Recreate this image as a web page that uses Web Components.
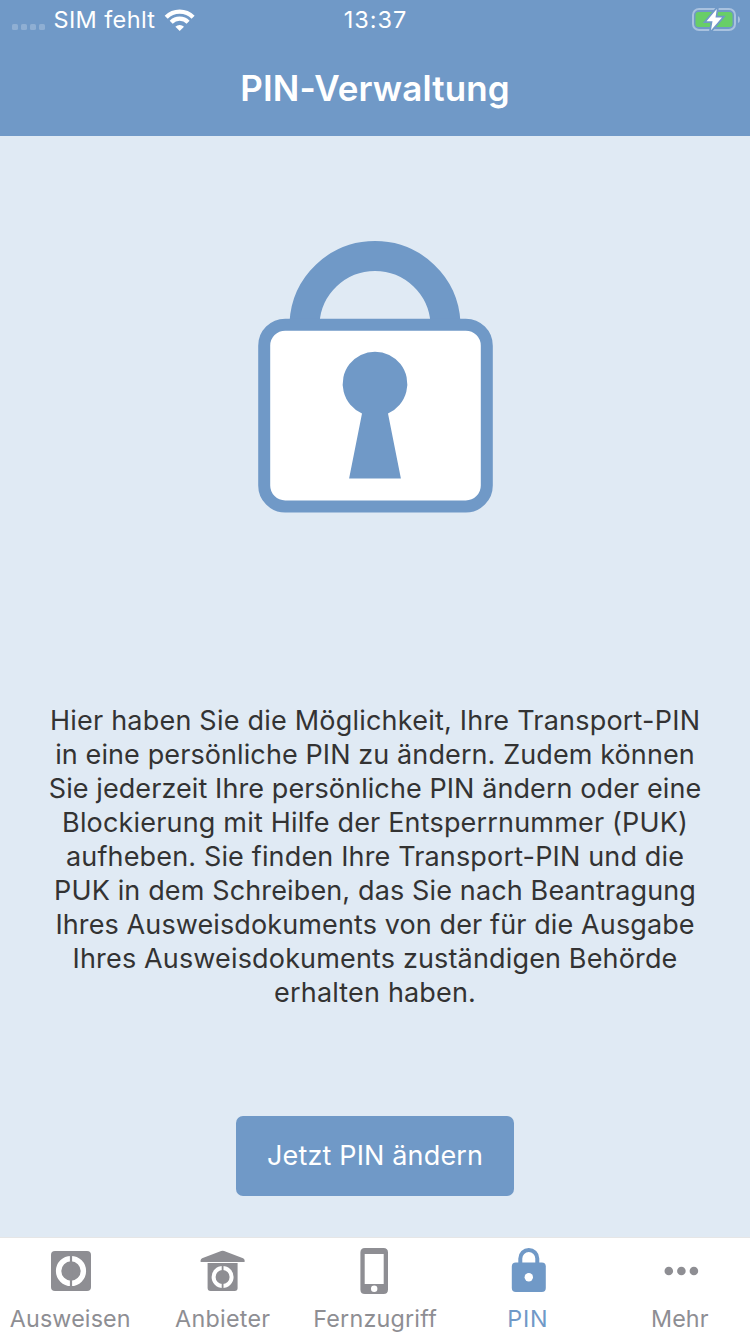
<!DOCTYPE html>
<html lang="de">
<head>
<meta charset="utf-8">
<title>PIN-Verwaltung</title>
<style>
html,body{margin:0;padding:0;height:100%}
body{font-family:Inter,"Noto Sans",sans-serif;overflow:hidden;background:#e0eaf4}
</style>
</head>
<body>
<pin-app></pin-app>
<script>
const define = (name, html, setup) => customElements.define(name, class extends HTMLElement {
  connectedCallback() {
    if (this.shadowRoot) return;
    const t = document.createElement('template');
    t.innerHTML = html;
    this.attachShadow({mode: 'open'}).append(t.content.cloneNode(true));
    if (setup) setup(this, this.shadowRoot);
  }
});

/* A single line of text tracked out to a given ink width. */
define('fit-text', `<style>:host{display:block;white-space:pre;width:max-content}</style><slot></slot>`, el => {
  const text = el.textContent, cs = getComputedStyle(el);
  const ctx = document.createElement('canvas').getContext('2d');
  ctx.font = `${cs.fontWeight} ${cs.fontSize} ${cs.fontFamily}`;
  const m = ctx.measureText(text);
  const ink = m.actualBoundingBoxRight + m.actualBoundingBoxLeft;
  const ls = (parseFloat(el.getAttribute('ink')) - ink) / (text.length - 1);
  el.style.letterSpacing = ls.toFixed(3) + 'px';
  el.style.marginRight = (-ls).toFixed(3) + 'px';
});

define('status-bar', `<style>
:host{display:grid;grid-template-columns:1fr auto 1fr;height:40px;color:#fff;font-size:23.5px;line-height:40px}
.left{display:flex;padding-left:12px}
.left svg:first-child{margin-right:7.500px}
.left svg:last-child{margin-left:.400px}
.right{display:flex;justify-content:flex-end}
fit-text{font-weight:430}
</style>
<div class="left">
<svg width="34" height="40" viewBox="12 0 34 40" fill="#8fafd3"><rect x="12" y="24" width="6" height="6" rx="1.6"/><rect x="21" y="24" width="6" height="6" rx="1.6"/><rect x="30" y="24" width="6" height="6" rx="1.6"/><rect x="39" y="24" width="6" height="6" rx="1.6"/></svg>
<fit-text ink="100.8">SIM fehlt</fit-text>
<svg width="42" height="40" viewBox="156 0 42 40"><g fill="none" stroke="#fff" stroke-width="4.300"><path d="M167.2 17.2a19 19 0 0 1 26.9 0"/><path d="M172.2 22.2a12 12 0 0 1 16.9 0"/></g><path d="M180.7 31l-4.3-4.3a6.2 6.2 0 0 1 8.6 0z" fill="#fff"/></svg>
</div>
<fit-text ink="61.3">13:37</fit-text>
<div class="right"><svg width="60" height="40" viewBox="690 0 60 40">
<rect x="693" y="9" width="42" height="21" rx="6" fill="none" stroke="#a9c2df" stroke-width="2"/>
<path d="M738 16q2 1 2 3.5t-2 3.5z" fill="#a9c2df"/>
<rect x="695.5" y="12" width="37" height="15" rx="3" fill="#68ce67"/>
<path d="M716.800 9L706.500 21.300h6l-1.500 9L722 17.500h-6.500z" fill="#fff" stroke="#7099c7" stroke-width="3.500" paint-order="stroke"/></svg></div>`);

define('title-bar', `<style>
:host{display:flex;justify-content:center;height:96px;color:#fff;font-size:35px;font-weight:580;line-height:96px}
</style>`, (el, root) => {
  const f = document.createElement('fit-text');
  f.setAttribute('ink', '265.5');
  f.textContent = el.getAttribute('label');
  root.append(f);
});

define('lock-picture', `<style>:host{display:block;height:276px}svg{display:block;margin:auto}</style>
<svg width="240" height="276" viewBox="255 238 240 276">
<path fill="none" stroke="#7099c7" stroke-width="30" d="M304.500 322A70.600 70.600 0 0 1 445.500 322" transform="translate(0 .8)"/>
<rect x="264.200" y="324.700" width="222.600" height="181.800" rx="21" fill="#fff" stroke="#7099c7" stroke-width="12"/>
<path fill="#7099c7" d="M362 413.500A32.300 32.300 0 1 1 388 413.500L400.900 478.500H349.100z"/></svg>`);

define('info-text', `<style>
:host{display:flex;flex-direction:column;align-items:center;font-size:27px;line-height:34px;color:#333}
</style>
<fit-text ink="645.7">Hier haben Sie die Möglichkeit, Ihre Transport-PIN</fit-text>
<fit-text ink="636.6">in eine persönliche PIN zu ändern. Zudem können</fit-text>
<fit-text ink="650.7">Sie jederzeit Ihre persönliche PIN ändern oder eine</fit-text>
<fit-text ink="621">Blockierung mit Hilfe der Entsperrnummer (PUK)</fit-text>
<fit-text ink="616.3">aufheben. Sie finden Ihre Transport-PIN und die</fit-text>
<fit-text ink="638.3">PUK in dem Schreiben, das Sie nach Beantragung</fit-text>
<fit-text ink="636.5">Ihres Ausweisdokuments von der für die Ausgabe</fit-text>
<fit-text ink="602">Ihres Ausweisdokuments zuständigen Behörde</fit-text>
<fit-text ink="199">erhalten haben.</fit-text>`);

define('action-button', `<style>
:host{display:flex;justify-content:center;width:278px;height:80px;border-radius:7px;background:#7099c7;color:#fff;font-size:27px;line-height:80px}
</style><fit-text ink="213">Jetzt PIN ändern</fit-text>`);

define('tab-item', `<style>
:host{display:flex;flex-direction:column;align-items:center;color:#8e8e93;font-size:23.300px;line-height:30px}
:host([active]){color:#7099c7}
::slotted(svg){display:block;width:152.400px;height:66px;margin-bottom:1px;fill:currentColor}
</style><slot></slot>`, (el, root) => {
  const f = document.createElement('fit-text');
  f.setAttribute('ink', el.getAttribute('ink'));
  f.textContent = el.getAttribute('label');
  root.append(f);
});

define('tab-bar', `<style>
:host{display:block;height:97px;background:#fff;overflow:hidden;box-shadow:inset 0 1px #e6e6e6}
nav{display:grid;grid-template-columns:repeat(5,152.400px);margin-left:-6px}
</style><nav>
<tab-item label="Ausweisen" ink="119"><svg viewBox="-6 1237 152.4 66"><rect x="51" y="1251" width="40" height="40" rx="4"/><circle cx="71" cy="1271" r="12.400" fill="none" stroke="#fff" stroke-width="5.400"/><path d="M69.900 1254h2.200v34h-2.200z"/></svg></tab-item>
<tab-item label="Anbieter" ink="95.3"><svg viewBox="146.4 1237 152.4 66"><path d="M201 1260.500q0-1.500 1.500-2.200L221.500 1251q1.500-.5 3 0L243.500 1258.300q1.500.7 1.500 2.200v1.500H201z"/><path d="M208 1263h30v25q0 3-3 3h-24q-3 0-3-3z"/><circle cx="223" cy="1277" r="9" fill="none" stroke="#fff" stroke-width="4"/><path d="M222.100 1264h1.800v26h-1.800z"/></svg></tab-item>
<tab-item label="Fernzugriff" ink="122"><svg viewBox="298.8 1237 152.4 66"><path fill-rule="evenodd" d="M364.700 1248h18.600q4.500 0 4.500 4.500v37q0 4.500-4.500 4.500h-18.600q-4.500 0-4.500-4.500v-37q0-4.500 4.500-4.500zM364.500 1254v30h19v-30zM370.800 1288.700a3.200 3.200 0 1 0 6.400 0a3.200 3.200 0 1 0-6.400 0z"/></svg></tab-item>
<tab-item active label="PIN" ink="36.6"><svg viewBox="451.2 1237 152.4 66"><path d="M520.500 1264v-5.500a8.500 8.500 0 0 1 17 0v5.500" fill="none" stroke="currentColor" stroke-width="4"/><rect x="512" y="1262.500" width="34" height="29.500" rx="4"/><circle cx="529" cy="1277.200" r="4.200" fill="#fff"/></svg></tab-item>
<tab-item label="Mehr" ink="55.8"><svg viewBox="603.6 1237 152.4 66"><circle cx="668.400" cy="1271" r="4.300"/><circle cx="681" cy="1271" r="4.300"/><circle cx="693.500" cy="1271" r="4.300"/></svg></tab-item>
</nav>`);

define('pin-app', `<style>
:host{display:flex;flex-direction:column;width:750px;height:1334px;background:#e0eaf4}
header{height:136px;background:#7099c7}
main{flex:1;display:flex;flex-direction:column;align-items:center;padding-top:102px}
info-text{margin-top:190px}
action-button{margin-top:106px}
</style>
<header><status-bar></status-bar><title-bar label="PIN-Verwaltung"></title-bar></header>
<main><lock-picture></lock-picture><info-text></info-text><action-button></action-button></main>
<tab-bar></tab-bar>`);
</script>
</body>
</html>
